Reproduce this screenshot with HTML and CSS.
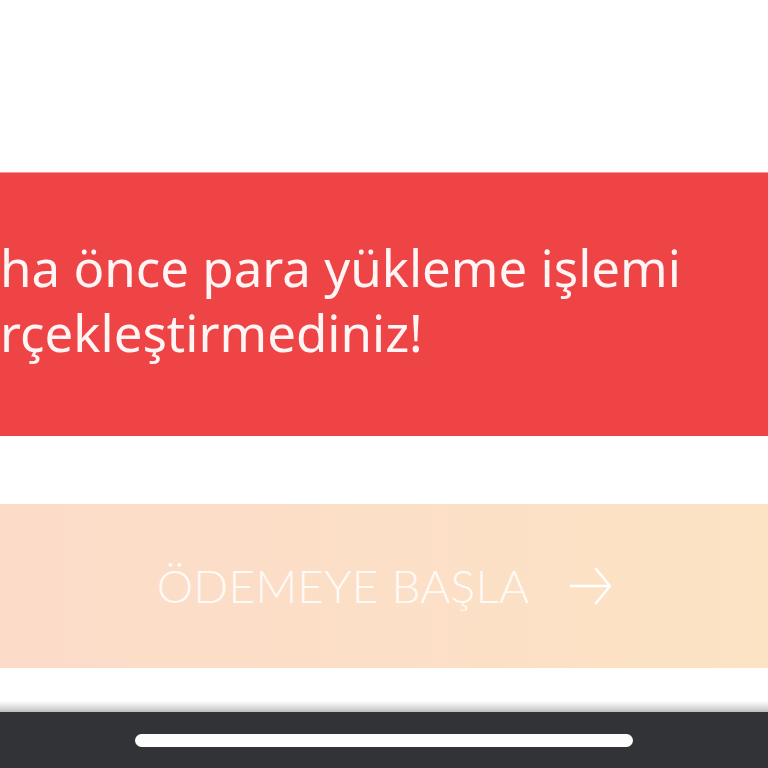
FILE: index.html
```html
<!DOCTYPE html>
<html lang="tr">
<head>
<meta charset="utf-8">
<title>Ödeme</title>
<link rel="stylesheet" href="styles.css">
</head>
<body>
<div class="screen">
  <div class="top-space"></div>
  <section class="alert">
    <p class="alert-line">ha önce para yükleme işlemi</p>
    <p class="alert-line">rçekleştirmediniz!</p>
  </section>
  <div class="gap"></div>
  <button class="pay" type="button">
    <span class="pay-label">ÖDEMEYE BAŞLA</span>
    <svg class="pay-arrow" width="44" height="40" viewBox="0 0 44 40" fill="none" stroke="#ffffff" stroke-width="2.4" stroke-linecap="round" stroke-linejoin="round">
      <path d="M2 20 H41"/>
      <path d="M27 3 L41 20 L27 37"/>
    </svg>
  </button>
  <div class="gap-bottom"></div>
  <div class="home-bar"><span class="home-indicator"></span></div>
</div>
</body>
</html>
```
FILE: styles.css
```css
* { box-sizing: border-box; }
html, body { margin: 0; padding: 0; background: #ffffff; }
.screen {
  width: 768px;
  height: 768px;
  overflow: hidden;
  display: flex;
  flex-direction: column;
}
.top-space { height: 172px; flex: none; background: #ffffff; }
.alert {
  height: 264px;
  flex: none;
  background: #ee4446;
  border-top: 1px solid #f29a98;
  padding: 62px 0 0 0;
  display: flex;
  flex-direction: column;
}
.alert-line {
  margin: 0;
  font-family: "Noto Sans", "DejaVu Sans", sans-serif;
  font-size: 51px;
  line-height: 65px;
  color: #fff5f5;
  white-space: nowrap;
  letter-spacing: 0px;
}
.gap { height: 68px; flex: none; background: #ffffff; }
.pay {
  height: 164px;
  flex: none;
  width: 100%;
  border: 0;
  margin: 0;
  padding: 0 0 0 2px;
  background: linear-gradient(90deg, #fcdcc9 0%, #fcdfc7 50%, #fce3c4 100%);
  display: flex;
  align-items: center;
  justify-content: center;
  gap: 40px;
  cursor: pointer;
}
.pay-label {
  font-family: "Lato", "Liberation Sans", sans-serif;
  font-weight: 300;
  font-size: 46px;
  color: #fffaf6;
  letter-spacing: 0.2px;
  line-height: 1;
}
.pay-arrow { display: block; flex: none; }
.gap-bottom {
  height: 44px;
  flex: none;
  background: linear-gradient(180deg, #ffffff 0%, #ffffff 75%, #d6d6d8 92%, #bcbcbf 100%);
}
.home-bar {
  flex: 1;
  background: #323336;
  display: flex;
  justify-content: center;
  padding-top: 22px;
}
.home-indicator {
  display: block;
  width: 498px;
  height: 13px;
  border-radius: 7px;
  background: #fdfdfd;
}
```
